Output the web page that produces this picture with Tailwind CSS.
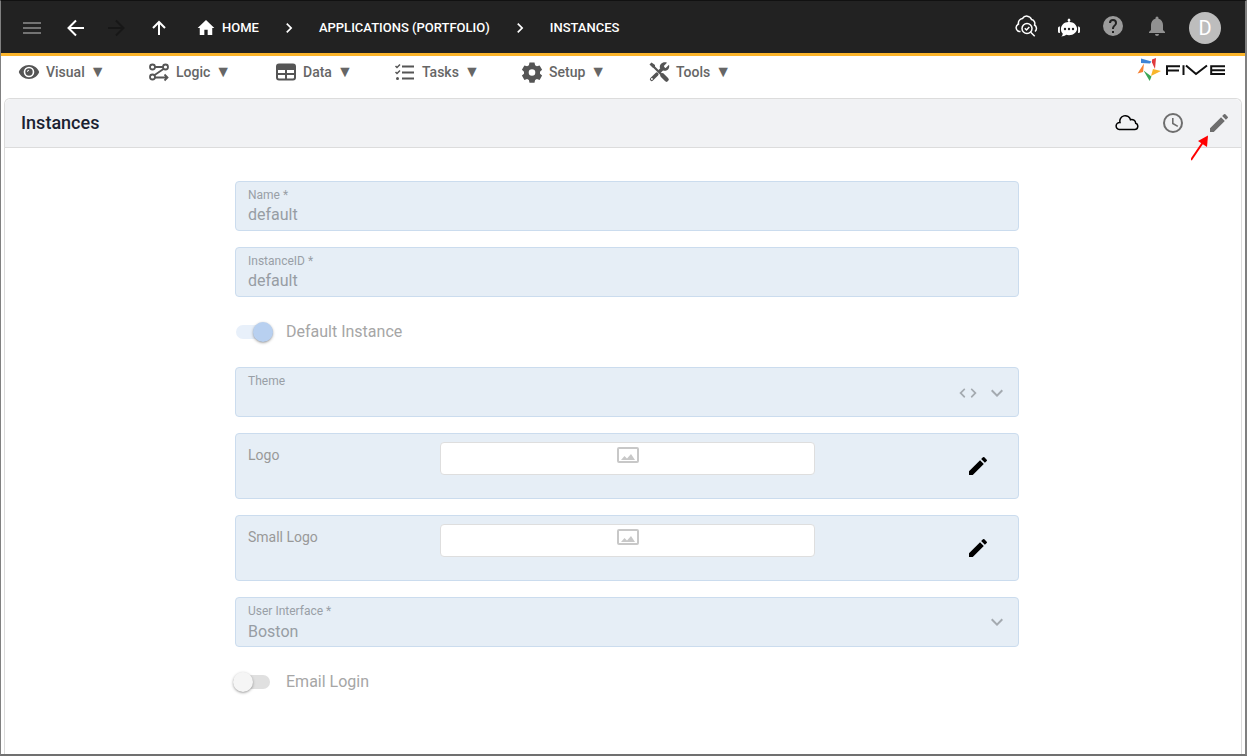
<!DOCTYPE html>
<html lang="en">
<head>
<meta charset="utf-8">
<title>Instances</title>
<script src="https://cdn.jsdelivr.net/npm/@tailwindcss/browser@4"></script>
</head>
<body class="bg-white font-['Roboto',sans-serif] text-[#5c5c5c]">
<svg class="hidden" aria-hidden="true">
  <symbol id="chev" viewBox="0 0 24 24"><path d="M8.6 16.6 13.2 12 8.6 7.4 10 6l6 6-6 6z"/></symbol>
  <symbol id="down" viewBox="0 0 24 24"><path d="M7.4 8.6 12 13.2l4.6-4.6L18 10l-6 6-6-6z"/></symbol>
  <symbol id="pen" viewBox="0 0 24 24"><path d="M3 17.25V21h3.75L17.81 9.94l-3.75-3.75L3 17.25zM20.71 7.04a1 1 0 0 0 0-1.41l-2.34-2.34a1 1 0 0 0-1.41 0l-1.83 1.83 3.75 3.75 1.83-1.83z"/></symbol>
  <symbol id="image" viewBox="0 0 22 16"><path fill-rule="evenodd" d="M2 0h18a2 2 0 0 1 2 2v12a2 2 0 0 1-2 2H2a2 2 0 0 1-2-2V2a2 2 0 0 1 2-2zM2 2v12h18V2zM4 13l3.500-4 2.500 2.500L14 7l4 6z"/></symbol>
</svg>
<div class="flex min-h-screen flex-col border-t border-l border-r-2 border-b-2 border-t-[#111] border-r-[#808080] border-b-[#707070] border-l-[#808080]">
  <header class="flex h-[55px] items-center justify-between border-b-3 border-[#fbb42a] bg-[#222] pt-0.5 pr-6 pl-[19px] text-white">
    <div class="flex items-center">
      <button aria-label="Menu" class="text-[#737373]"><svg class="size-6" viewBox="0 0 24 24" fill="currentColor"><path d="M3 6h18v2H3zM3 11h18v2H3zM3 16h18v2H3z"/></svg></button>
      <button aria-label="Back" class="ml-5"><svg class="size-6" viewBox="0 0 24 24" fill="none" stroke="currentColor" stroke-width="2"><path d="M20 12H5M12 4.500 4.500 12l7.500 7.500"/></svg></button>
      <button aria-label="Forward" class="ml-4 text-[#171717]"><svg class="size-6" viewBox="0 0 24 24" fill="none" stroke="currentColor" stroke-width="2"><path d="M4 12h15M12 4.500 19.500 12 12 19.500"/></svg></button>
      <button aria-label="Up" class="ml-[19px]"><svg class="size-6" viewBox="0 0 24 24" fill="none" stroke="currentColor" stroke-width="2"><path d="M12 19V6M6 12l6-6 6 6"/></svg></button>
      <nav aria-label="Breadcrumb" class="ml-[25px] flex items-center text-[13px] font-medium">
        <a href="#" class="flex items-center gap-1.5"><svg class="size-5" viewBox="0 0 24 24" fill="currentColor"><path d="M10 20.500v-6.500h4v6.500h5.500V12h2.500L12 2.500 2 12h2.500v8.500z"/></svg>HOME</a>
        <svg class="mx-5 size-5 fill-white" aria-hidden="true"><use href="#chev"/></svg>
        <a href="#">APPLICATIONS (PORTFOLIO)</a>
        <svg class="mx-5 size-5 fill-white" aria-hidden="true"><use href="#chev"/></svg>
        <a href="#">INSTANCES</a>
      </nav>
    </div>
    <div class="flex items-center">
      <button aria-label="Inspect cloud" class="mb-1"><svg class="h-6 w-6" viewBox="0 0 24 24" fill="none" stroke="currentColor" stroke-width="1.500"><path d="M6.500 17.500H5a4 4 0 0 1-.5-7.500 4.500 4.500 0 0 1 4-5.500 5 5 0 0 1 9 1 4 4 0 0 1 3 5.500 4 4 0 0 1 .5 6.500"/><circle cx="13" cy="14.500" r="5"/><path d="m10.800 14.300 1.700 1.700 2.800-3M16.700 18.200l4 4"/></svg></button>
      <button aria-label="Assistant" class="ml-[19px]"><svg class="size-6" viewBox="0 0 24 24"><path fill="currentColor" d="M11.300 6V5.300a1.400 1.400 0 1 1 1.400 0V6c4 .1 6.600 2.600 7.300 6 .6 4-3.500 7.200-8 7.200-1 0-2-.1-2.800-.4-1.400 1.200-3 1.700-5 1.700 1-.8 1.500-1.700 1.500-3C4.300 16.300 3.700 14.300 4 12c.6-3.400 3.300-5.900 7.300-6z"/><path fill="currentColor" d="M2.900 10.500v6.500c-1.200 0-1.900-.6-1.900-1.600v-3.300c0-1 .7-1.600 1.900-1.600zM21.100 10.500v6.500c1.200 0 1.900-.6 1.900-1.600v-3.300c0-1-.7-1.600-1.900-1.600z"/><g fill="#222"><circle cx="8" cy="13" r="1.200"/><circle cx="12" cy="13" r="1.200"/><circle cx="16" cy="13" r="1.200"/></g></svg></button>
      <button aria-label="Help" class="mb-1 ml-5 text-[#9b9b9b]"><svg class="size-6" viewBox="0 0 24 24" fill="currentColor"><path d="M12 2a10 10 0 1 0 0 20 10 10 0 0 0 0-20zm1 17h-2v-2h2zm2.070-7.750-.9.920C13.450 12.900 13 13.500 13 15h-2v-.5c0-1.100.45-2.100 1.170-2.830l1.240-1.260c.37-.36.59-.86.590-1.410a2 2 0 1 0-4 0H8a4 4 0 1 1 8 0c0 .88-.36 1.680-.93 2.250z"/></svg></button>
      <button aria-label="Notifications" class="mb-1 ml-5 text-[#919191]"><svg class="size-6" viewBox="0 0 24 24" fill="currentColor"><path d="M12 22a2 2 0 0 0 2-2h-4a2 2 0 0 0 2 2zm6-6v-5c0-3.070-1.640-5.640-4.500-6.320V4a1.500 1.500 0 0 0-3 0v.68C7.630 5.360 6 7.920 6 11v5l-2 2v1h16v-1z"/></svg></button>
      <button aria-label="Account" class="ml-5 flex size-8 items-center justify-center rounded-full bg-[#bdbdbd] text-xl">D</button>
    </div>
  </header>

  <div class="flex h-[42px] items-start justify-between pr-5 pl-4">
    <nav aria-label="Main" class="flex pt-1 text-sm font-medium text-[#666]">
      <button class="flex w-[130px] items-center gap-[5px]"><svg class="size-6" viewBox="0 0 24 24" fill="#555"><path fill-rule="evenodd" d="M12 5C7 5 3.300 8.200 1.800 12c1.500 3.800 5.200 7 10.200 7s8.700-3.200 10.200-7C20.700 8.200 17 5 12 5zm0 1.700a5.300 5.300 0 1 1 0 10.600 5.300 5.300 0 0 1 0-10.600z"/><path d="M12 8.300A3.700 3.700 0 1 0 15.700 12 3.700 3.700 0 0 0 12 8.300zm-2 3.500c0-1 .8-2 2-2v1c-.6 0-1 .5-1 1z" fill-rule="evenodd"/></svg><span>Visual</span><span class="text-base leading-5">▼</span></button>
      <button class="flex w-[127px] items-center gap-[5px]"><svg class="size-6" viewBox="0 0 24 24" fill="none" stroke="#555" stroke-width="1.800"><circle cx="5.500" cy="7" r="2.500"/><circle cx="18.500" cy="7" r="2.500"/><circle cx="5.500" cy="17" r="2.500"/><path d="M8 7h8M16.800 8.800 7.300 15.300M8 17.500h12M17.500 14.500l3 3-3 3"/></svg><span>Logic</span><span class="text-base leading-5">▼</span></button>
      <button class="flex w-[119px] items-center gap-[5px]"><svg class="size-6" viewBox="0 0 24 24" fill="none" stroke="#555" stroke-width="2"><rect x="3" y="4.500" width="18" height="15" rx="2"/><path d="M3 9h18M3 14h18M12 9v10" /><path d="M3 6.500h18" stroke-width="3"/></svg><span>Data</span><span class="text-base leading-5">▼</span></button>
      <button class="flex w-[127px] items-center gap-[5px]"><svg class="size-6" viewBox="0 0 24 24" fill="none" stroke="#555" stroke-width="2"><path d="M9 6.500h12M9 12.500h12M9 18.500h12"/><path stroke-width="1.500" d="m2.500 6 1.500 1.500L7 4.500M2.500 12 4 13.500l3-3"/><circle cx="4.500" cy="18.500" r="1.500" fill="#555" stroke="none"/></svg><span>Tasks</span><span class="text-base leading-5">▼</span></button>
      <button class="flex w-[127px] items-center gap-[5px]"><svg class="size-6" viewBox="0 0 24 24" fill="#555"><path fill-rule="evenodd" d="m9.500 2.500-.6 2.800-1.800 1-2.700-.9-2.500 4.300 2.100 2v2l-2.100 1.900 2.500 4.300 2.700-.9 1.800 1 .6 2.700h5l.6-2.700 1.800-1 2.700.9 2.500-4.300-2.100-1.900v-2l2.100-2-2.500-4.300-2.700.9-1.800-1-.6-2.800zM12 9.200a3.300 3.300 0 1 1 0 6.600 3.300 3.300 0 0 1 0-6.600z"/></svg><span>Setup</span><span class="text-base leading-5">▼</span></button>
      <button class="flex w-[127px] items-center gap-[5px]"><svg class="size-6" viewBox="0 0 24 24" fill="none" stroke="#555"><path stroke-width="2.200" d="m6 6 9 9"/><path stroke-width="4.500" stroke-linecap="round" d="m15.500 15.500 4 4"/><path fill="#555" stroke="none" d="m2.500 4.500 2-2L8 5v2.500H5.500z"/><path stroke-width="3.600" stroke-linecap="round" d="M4.700 19.300 9.800 14.200M13 11l3-3"/><path fill="#555" stroke="none" d="M20 2.700 16.800 6l.3 1.700 1.600.3L22 4.700c1 3.500-1.300 6.600-5.200 6L13 8.200c-1-4 3-7 7-5.500z"/><circle cx="4.900" cy="19.100" r="1" fill="#fff" stroke="none"/></svg><span>Tools</span><span class="text-base leading-5">▼</span></button>
    </nav>
    <svg class="mt-0.5 h-6 w-[88px]" viewBox="0 0 88 24" role="img" aria-label="Five">
      <path fill="#3d84d6" d="M4 0.500 14.500 3.500 13 5.500 4 5z"/><path fill="#e03a3e" d="M19 0 15 1.500v3L18 11z"/><path fill="#f8b52b" d="m16 11 8 2-10 5z"/><path fill="#3aa757" d="m6.500 12.500 8 6-1.800 4.500z"/><path fill="#f58235" d="M7 5.500 6 14l-5.500 1.500z"/>
      <g fill="none" stroke="#111" stroke-width="2"><path d="M30 17V8.200h13M30 12.500h12M46.500 7.200V17M49 7.500 59 16 70 7.500M88 8.200H74.200v7.800H88M74 12.200h14"/></g>
    </svg>
  </div>

  <main class="mr-[3px] ml-[3px] flex flex-1 flex-col rounded-t-md border border-b-0 border-[#dcdcdc]">
    <div class="flex h-[49px] items-center justify-between rounded-t-md border-b border-[#dcdcdc] bg-[#f1f2f4] pr-2.5 pl-4">
      <h1 class="text-lg font-medium text-[#1a2232]">Instances</h1>
      <div class="flex items-center gap-[22px] text-[#6e6e6e]">
        <button aria-label="Cloud" class="text-black"><svg class="size-6" viewBox="0 0 24 24" fill="none" stroke="currentColor" stroke-width="1.500"><path d="M4.300 18.500h15.400a3.200 3.200 0 0 0 1-6.200 4 4 0 0 0-5.200-3.600A5.300 5.300 0 0 0 5 11.500a3.500 3.500 0 0 0-.7 7z"/></svg></button>
        <button aria-label="History"><svg class="size-6" viewBox="0 0 24 24" fill="none" stroke="currentColor" stroke-width="2"><circle cx="12" cy="12" r="9"/><path stroke-width="1.600" d="M11.800 7v5.500l5 2.900"/></svg></button>
        <div class="relative flex">
          <button aria-label="Edit"><svg class="size-6" fill="currentColor"><use href="#pen"/></svg></button>
          <svg class="absolute top-6 -left-4 h-[26px] w-5" viewBox="0 0 20 26" aria-hidden="true"><path d="M0 25 11.500 8" stroke="red" stroke-width="2"/><path fill="red" d="M17 .5 7 6l9 6z"/></svg>
        </div>
      </div>
    </div>

    <form class="mx-auto flex w-full max-w-[792px] flex-col gap-4 pt-[33px] pb-4 pl-2 text-[#a2a7ad]">
      <div class="flex h-[50px] flex-col rounded border border-[#cbdcee] bg-[#e6eef6] px-3 pt-[5px]">
        <label for="name" class="text-xs text-[#999fa6]">Name *</label>
        <input id="name" value="default" disabled class="h-6 w-full bg-transparent text-base text-[#979da4]">
      </div>
      <div class="flex h-[50px] flex-col rounded border border-[#cbdcee] bg-[#e6eef6] px-3 pt-[5px]">
        <label for="iid" class="text-xs text-[#999fa6]">InstanceID *</label>
        <input id="iid" value="default" disabled class="h-6 w-full bg-transparent text-base text-[#979da4]">
      </div>
      <label class="flex h-[38px] items-center gap-[13px] text-[#a6a6a6]">
        <input type="checkbox" role="switch" checked disabled class="relative ml-px h-3.5 w-[37px] appearance-none rounded-full bg-[#e8f0fa] before:absolute before:-top-[3px] before:right-0 before:size-5 before:rounded-full before:bg-[#b8d0f0] before:shadow-sm before:shadow-black/30 before:content-['']">
        Default Instance
      </label>
      <div class="flex h-[50px] items-center rounded border border-[#cbdcee] bg-[#e6eef6] px-3">
        <div class="flex h-full flex-1 flex-col pt-[5px]">
          <label for="theme" class="text-xs text-[#999fa6]">Theme</label>
          <select id="theme" disabled class="h-6 w-full appearance-none bg-transparent text-base opacity-100"><option></option></select>
        </div>
        <svg class="mt-0.5 mr-2 size-[18px]" viewBox="0 0 24 24" fill="#a4aab0" aria-hidden="true"><path d="M8.400 16.600 3.800 12l4.600-4.600L7 5.500 .5 12 7 18.500zM15.600 16.600l4.600-4.600-4.600-4.600L17 5.500l6.500 6.500-6.500 6.500z"/></svg>
        <svg class="mt-0.5 -mr-[3px] size-6 fill-[#a4aab0]" aria-hidden="true"><use href="#down"/></svg>
      </div>
      <div class="grid h-[66px] grid-cols-[192px_375px_1fr] rounded border border-[#cbdcee] bg-[#e6eef6] px-3 pt-2">
        <span class="pt-1 text-sm leading-[18px] text-[#999]">Logo</span>
        <div class="flex h-[33px] justify-center rounded border border-[#dedede] bg-white pt-1"><svg class="h-4 w-[22px] fill-[#c8c8c8]" role="img" aria-label="No image"><use href="#image"/></svg></div>
        <button type="button" aria-label="Edit logo" class="mt-3 mr-4 size-6 justify-self-end"><svg class="size-6 fill-black"><use href="#pen"/></svg></button>
      </div>
      <div class="grid h-[66px] grid-cols-[192px_375px_1fr] rounded border border-[#cbdcee] bg-[#e6eef6] px-3 pt-2">
        <span class="pt-1 text-sm leading-[18px] text-[#999]">Small Logo</span>
        <div class="flex h-[33px] justify-center rounded border border-[#dedede] bg-white pt-1"><svg class="h-4 w-[22px] fill-[#c8c8c8]" role="img" aria-label="No image"><use href="#image"/></svg></div>
        <button type="button" aria-label="Edit small logo" class="mt-3 mr-4 size-6 justify-self-end"><svg class="size-6 fill-black"><use href="#pen"/></svg></button>
      </div>
      <div class="flex h-[50px] items-center rounded border border-[#cbdcee] bg-[#e6eef6] px-3">
        <div class="flex h-full flex-1 flex-col pt-[5px]">
          <label for="ui" class="text-xs text-[#999fa6]">User Interface *</label>
          <select id="ui" disabled class="h-[26px] w-full appearance-none bg-transparent text-base text-[#979da4] opacity-100"><option>Boston</option></select>
        </div>
        <svg class="-mr-[3px] size-6 fill-[#a4aab0]" aria-hidden="true"><use href="#down"/></svg>
      </div>
      <label class="flex h-[38px] items-center gap-4 text-[#a6a6a6]">
        <input type="checkbox" role="switch" disabled class="relative -ml-0.5 h-3.5 w-[37px] appearance-none rounded-full bg-[#e0e0e0] before:absolute before:-top-[3px] before:left-0 before:size-5 before:rounded-full before:bg-[#f5f5f5] before:shadow-sm before:shadow-black/30 before:content-['']">
        Email Login
      </label>
    </form>
  </main>
</div>
</body>
</html>
